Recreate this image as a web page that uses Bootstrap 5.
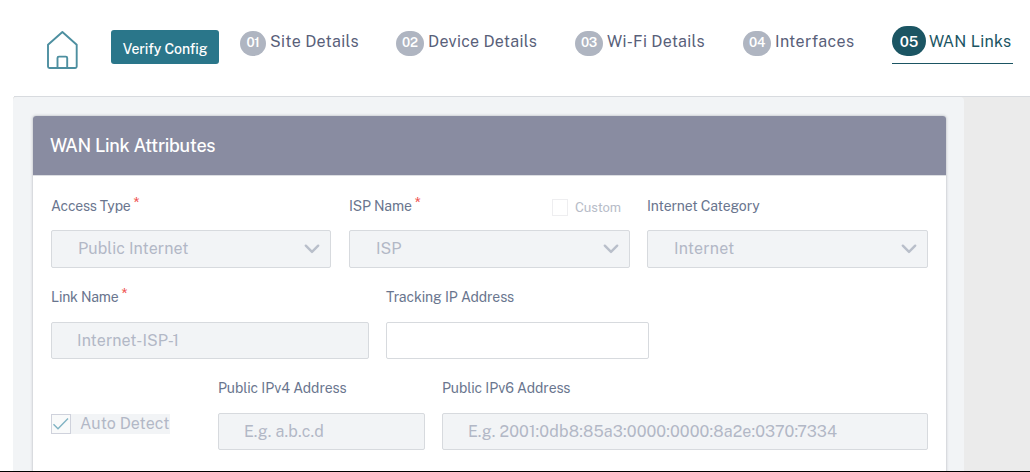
<!DOCTYPE html>
<html lang="en">
<head>
<meta charset="utf-8">
<meta name="viewport" content="width=device-width, initial-scale=1">
<title>WAN Links</title>
<link href="https://cdn.jsdelivr.net/npm/bootstrap@5.3.0/dist/css/bootstrap.min.css" rel="stylesheet">
<style>
body{font-family:"Public Sans",Inter,"Liberation Sans",sans-serif;font-size:16px;background:#fff;color:#586079;height:472px;overflow:hidden;border-bottom:1px solid #000}
.topbar{height:97px;margin-left:14px;border-bottom:1px solid #d8dbdf;padding-left:32px}
.home-link{width:65px;padding-top:30px}
.btn-verify{width:108px;height:34px;margin-top:30px;padding:4px 0 0;font-size:14px;font-weight:500;letter-spacing:-.1px;line-height:30px;border:0;border-radius:3px;background:#2a768a;color:#fff}
.steps{display:grid;grid-template-columns:156px 179px 168px 149px 121px;margin-left:21px;padding-top:26px}
.step{height:38px;white-space:nowrap;color:#586079;text-decoration:none}
.step-no{flex:none;height:25px;width:28px;margin-right:4px;margin-top:5px;padding-bottom:3px;border-radius:14px;background:#afb5c1;color:#fff;font-size:13px;font-weight:600;line-height:23px;letter-spacing:-.2px}
.step-text{line-height:32px}
.step.active{border-bottom:1px solid #1b5563;color:#1b5563}
.step.active .step-no{width:34px;height:30px;margin-top:0;margin-right:3px;padding-bottom:0;border-radius:16px;font-size:14.5px;line-height:31px;letter-spacing:0;background:#1b5563}
.workspace{margin-left:13px;height:374px;background:#ebebeb}
.panel{width:951px;border-radius:4px 4px 0 0;background:#f2f4f6;padding:19px 18px 0 20px}
.attr-card{border:0;border-radius:3px 3px 0 0;height:370px;box-shadow:0 0 3px rgba(60,65,80,.38)}
.attr-head{height:60px;padding:0 18px 0 17px;background:#898ca1;color:#fff;font-size:18px;font-weight:500;letter-spacing:-.29px;line-height:59px;border:0;border-bottom:1px solid #dcdee2;border-radius:3px 3px 0 0!important}
.attr-body{padding:20px 18px 0}
.fields{display:grid}
.fields-a{grid-template-columns:280px 281px 281px;column-gap:18px;height:91px}
.fields-a>:nth-child(3){margin-left:-1px;margin-right:1px}
.fields-b{grid-template-columns:318px 263px;column-gap:17px;height:91px}
.fields-c{grid-template-columns:150px 207px 486px;column-gap:17px}
.field-label{height:34px;font-size:14px;line-height:21px;color:#69758e;white-space:nowrap}
.req{color:#ef5350;font-size:15px;line-height:12px;margin-left:3px;align-self:flex-start;margin-top:1px}
.field-box{height:37px;padding:0 0 0 25px;border:1px solid #d7dade;border-radius:2px;background:#f2f4f6!important;color:#b2b8c6;font-size:16px;line-height:35px}
.field-box::placeholder{color:#b2b8c6;opacity:1}
.field-box.blank{background:#fff!important}
.pick{height:38px;padding:0 10px 0 26px;line-height:36px}
.custom-box{width:16px;height:17px;border:1px solid #eeeef0;margin-right:7px}
.custom-opt{font-size:13px;letter-spacing:-.05px;color:#b7bcc8;padding-right:9px;height:21px;margin-top:1px}
.auto-row{width:119px;height:20px;margin-top:36px;background:#f2f4f6;color:#b2b8c6;white-space:nowrap}
.auto-box{width:20px;height:20px;border:1px solid #cfd2dc;background:#f9fafa;margin-right:9px}
</style>
</head>
<body>
<header class="topbar d-flex align-items-start">
  <a class="home-link" href="#" aria-label="Home"><svg class="d-block" width="33" height="40" viewBox="0 0 33 40" fill="none" stroke="#4d8fa0" stroke-width="1.9" stroke-linejoin="round"><path d="M2 14.8 16.4 2 30.7 14.8V36.5Q30.7 38 29.2 38H3.5Q2 38 2 36.5Z"/><path d="M11.5 38V28Q11.5 26.6 12.9 26.6H19.8Q21.2 26.6 21.2 28V38"/></svg></a>
  <button class="btn btn-verify" type="button">Verify Config</button>
  <nav class="steps" aria-label="Steps">
    <a class="step d-flex" href="#"><span class="step-no text-center" style="width:26px">01</span><span class="step-text" style="letter-spacing:.32px">Site Details</span></a>
    <a class="step d-flex" href="#"><span class="step-no text-center">02</span><span class="step-text" style="letter-spacing:.28px">Device Details</span></a>
    <a class="step d-flex" href="#"><span class="step-no text-center">03</span><span class="step-text" style="letter-spacing:.28px">Wi-Fi Details</span></a>
    <a class="step d-flex" href="#"><span class="step-no text-center">04</span><span class="step-text" style="letter-spacing:.35px">Interfaces</span></a>
    <a class="step active d-flex" href="#"><span class="step-no text-center">05</span><span class="step-text" style="letter-spacing:.25px">WAN Links</span></a>
  </nav>
</header>
<main class="workspace">
  <div class="panel">
    <section class="card attr-card">
      <h1 class="card-header attr-head m-0">WAN Link Attributes</h1>
      <div class="card-body attr-body">
        <div class="fields fields-a">
          <div><div class="field-label d-flex" style="letter-spacing:-.2px">Access Type<span class="req">*</span></div>
            <div class="field-box pick d-flex justify-content-between align-items-center"><span style="letter-spacing:.1px">Public Internet</span><svg width="16" height="10" viewBox="0 0 16 10" fill="none" stroke="#b9bfca" stroke-width="2.4" stroke-linecap="round" stroke-linejoin="round"><path d="M1.8 1.7 8 7.9 14.2 1.7"/></svg></div></div>
          <div><div class="field-label d-flex"><span style="letter-spacing:-.15px">ISP Name</span><span class="req">*</span><label class="custom-opt ms-auto d-flex align-items-center"><span class="custom-box"></span>Custom</label></div>
            <div class="field-box pick d-flex justify-content-between align-items-center"><span>ISP</span><svg width="16" height="10" viewBox="0 0 16 10" fill="none" stroke="#b9bfca" stroke-width="2.4" stroke-linecap="round" stroke-linejoin="round"><path d="M1.8 1.7 8 7.9 14.2 1.7"/></svg></div></div>
          <div><div class="field-label" style="letter-spacing:-.12px">Internet Category</div>
            <div class="field-box pick d-flex justify-content-between align-items-center"><span style="letter-spacing:.2px">Internet</span><svg width="16" height="10" viewBox="0 0 16 10" fill="none" stroke="#b9bfca" stroke-width="2.4" stroke-linecap="round" stroke-linejoin="round"><path d="M1.8 1.7 8 7.9 14.2 1.7"/></svg></div></div>
        </div>
        <div class="fields fields-b">
          <div><div class="field-label d-flex" style="height:35px;letter-spacing:-.2px">Link Name<span class="req">*</span></div>
            <input class="form-control field-box" style="letter-spacing:.1px" value="Internet-ISP-1" disabled aria-label="Link Name"></div>
          <div><div class="field-label" style="height:35px;letter-spacing:-.11px">Tracking IP Address</div>
            <input class="form-control field-box blank" aria-label="Tracking IP Address"></div>
        </div>
        <div class="fields fields-c">
          <div class="auto-row d-flex"><span class="auto-box"><svg class="d-block" width="18" height="18" viewBox="0 0 18 18" fill="none" stroke="#80b3c3" stroke-width="1.4"><path d="M1.5 9.2 6 13.8 16 3.4"/></svg></span><span style="letter-spacing:.06px;line-height:19px">Auto Detect</span></div>
          <div><div class="field-label" style="height:35px;letter-spacing:-.1px">Public IPv4 Address</div>
            <input class="form-control field-box" style="letter-spacing:.15px" placeholder="E.g. a.b.c.d" disabled aria-label="Public IPv4 Address"></div>
          <div><div class="field-label" style="height:35px;letter-spacing:-.1px">Public IPv6 Address</div>
            <input class="form-control field-box" style="letter-spacing:.14px" placeholder="E.g. 2001:0db8:85a3:0000:0000:8a2e:0370:7334" disabled aria-label="Public IPv6 Address"></div>
        </div>
      </div>
    </section>
  </div>
</main>
<script src="https://cdn.jsdelivr.net/npm/bootstrap@5.3.0/dist/js/bootstrap.bundle.min.js"></script>
</body>
</html>
